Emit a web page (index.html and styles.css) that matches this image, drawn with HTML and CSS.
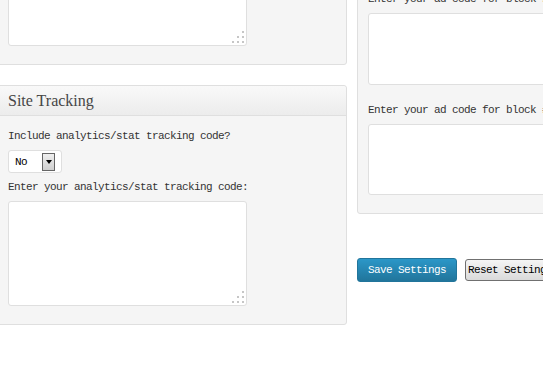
FILE: index.html
```html
<html lang="en">
<head>
    <meta charset="UTF-8">
    <meta name="viewport" content="width=device-width, initial-scale=1.0">
    <title>Theme Settings</title>
    <link rel="stylesheet" href="styles.css">
</head>
<body>
    <div class="page">
        <div class="column">
            <div class="panel">
                <h3 class="panel-title">Header &amp; Footer</h3>
                <div class="panel-body">
                    <label class="field-label">Enter your header code:</label>
                    <div class="code-box">
                        <textarea class="code first"></textarea>
                        <svg class="grip" width="13" height="13" viewBox="0 0 13 13"><rect x="10" y="0" width="2" height="2"/><rect x="5" y="5" width="2" height="2"/><rect x="10" y="5" width="2" height="2"/><rect x="0" y="10" width="2" height="2"/><rect x="5" y="10" width="2" height="2"/><rect x="10" y="10" width="2" height="2"/></svg>
                    </div>
                    <label class="field-label">Enter your footer code:</label>
                    <div class="code-box">
                        <textarea class="code"></textarea>
                        <svg class="grip" width="13" height="13" viewBox="0 0 13 13"><rect x="10" y="0" width="2" height="2"/><rect x="5" y="5" width="2" height="2"/><rect x="10" y="5" width="2" height="2"/><rect x="0" y="10" width="2" height="2"/><rect x="5" y="10" width="2" height="2"/><rect x="10" y="10" width="2" height="2"/></svg>
                    </div>
                </div>
            </div>

            <div class="panel">
                <h3 class="panel-title">Site Tracking</h3>
                <div class="panel-body">
                    <label class="field-label" for="tracking">Include analytics/stat tracking code?</label>
                    <div class="select-box">
                        <select id="tracking">
                            <option>No</option>
                            <option>Yes</option>
                        </select>
                        <span class="select-arrow"></span>
                    </div>
                    <label class="field-label">Enter your analytics/stat tracking code:</label>
                    <div class="code-box">
                        <textarea class="code"></textarea>
                        <svg class="grip" width="13" height="13" viewBox="0 0 13 13"><rect x="10" y="0" width="2" height="2"/><rect x="5" y="5" width="2" height="2"/><rect x="10" y="5" width="2" height="2"/><rect x="0" y="10" width="2" height="2"/><rect x="5" y="10" width="2" height="2"/><rect x="10" y="10" width="2" height="2"/></svg>
                    </div>
                </div>
            </div>
        </div>

        <div class="column">
            <div class="panel">
                <h3 class="panel-title">Ad Blocks</h3>
                <div class="panel-body">
                    <label class="field-label">Enter your ad code for block #1:</label>
                    <div class="code-box"><textarea class="code small"></textarea></div>
                    <label class="field-label">Enter your ad code for block #2:</label>
                    <div class="code-box"><textarea class="code small"></textarea></div>
                    <label class="field-label">Enter your ad code for block #3:</label>
                    <div class="code-box"><textarea class="code small"></textarea></div>
                    <label class="field-label">Enter your ad code for block #4:</label>
                    <div class="code-box"><textarea class="code small last"></textarea></div>
                </div>
            </div>

            <div class="actions">
                <button class="btn-save" type="submit">Save Settings</button>
                <button class="btn-reset" type="reset">Reset Settings</button>
            </div>
        </div>
    </div>
</body>
</html>
```

FILE: styles.css
```css
/* Theme settings page */
html, body {
    overflow: hidden;
}

body {
    margin: 0;
    padding: 0;
    background-color: #ffffff;
    font-family: "Liberation Mono", monospace;
    color: #333333;
}

/* page is scrolled down a bit in this view */
.page {
    display: flex;
    align-items: flex-start;
    gap: 10px;
    margin: -274px 0 0 -3px;
}

.column {
    width: 350px;
    flex-shrink: 0;
}

.panel {
    background-color: #f5f5f5;
    border: 1px solid #dfdfdf;
    border-radius: 3px;
    margin-bottom: 20px;
}

.panel-title {
    margin: 0;
    height: 29px;
    line-height: 29px;
    padding: 0 10px;
    font-family: "Liberation Serif", Georgia, serif;
    font-size: 16px;
    font-weight: normal;
    color: #464646;
    background: linear-gradient(#f9f9f9, #ececec);
    border-bottom: 1px solid #dfdfdf;
    border-radius: 3px 3px 0 0;
}

.panel-body {
    padding: 13px 10px 0 10px;
}

.field-label {
    display: block;
    font-size: 11px;
    line-height: 14px;
    letter-spacing: -0.6px;
    margin-bottom: 7px;
    color: #333333;
}

.code-box {
    position: relative;
    width: 239px;
    margin-bottom: 18px;
}

.code {
    display: block;
    width: 239px;
    height: 105px;
    box-sizing: border-box;
    border: 1px solid #dfdfdf;
    border-radius: 3px;
    background-color: #ffffff;
    resize: none;
    margin: 0;
}

.code.first {
    height: 111px;
}

.code.small {
    height: 72px;
}

.code.small.last {
    height: 71px;
}

.grip {
    position: absolute;
    right: 2px;
    bottom: 2px;
    fill: #c6c6c6;
}

.select-box {
    display: flex;
    align-items: center;
    width: 54px;
    height: 23px;
    box-sizing: border-box;
    padding: 0 6px;
    margin-bottom: 7px;
    background-color: #ffffff;
    border: 1px solid #dfdfdf;
    border-radius: 3px;
}

.select-box select {
    appearance: none;
    -webkit-appearance: none;
    flex: 1;
    width: 27px;
    border: 0;
    padding: 0;
    margin: 0;
    background: transparent;
    font-family: "Liberation Mono", monospace;
    font-size: 11px;
    letter-spacing: -0.6px;
    color: #000000;
}

.select-arrow {
    display: flex;
    align-items: center;
    justify-content: center;
    width: 13px;
    height: 18px;
    box-sizing: border-box;
    border: 1px solid #666666;
    background: linear-gradient(#efefef, #cfcfcf);
}

.select-arrow::after {
    content: "";
    border-style: solid;
    border-width: 4px 3px 0 3px;
    border-color: #000000 transparent transparent transparent;
}

.actions {
    display: flex;
    align-items: center;
    gap: 8px;
    margin-top: 44px;
}

.btn-save,
.btn-reset {
    font-family: "Liberation Mono", monospace;
    font-size: 11px;
    letter-spacing: -0.6px;
    border-radius: 3px;
    cursor: pointer;
}

.btn-save {
    height: 24px;
    padding: 0 10px;
    color: #ffffff;
    background: linear-gradient(#2b97c8, #21759b);
    border: 1px solid #21759b;
}

.btn-reset {
    height: 22px;
    padding: 0 2px;
    color: #000000;
    background: linear-gradient(#f5f5f5, #dadada);
    border: 1px solid #707070;
    white-space: nowrap;
}
```
